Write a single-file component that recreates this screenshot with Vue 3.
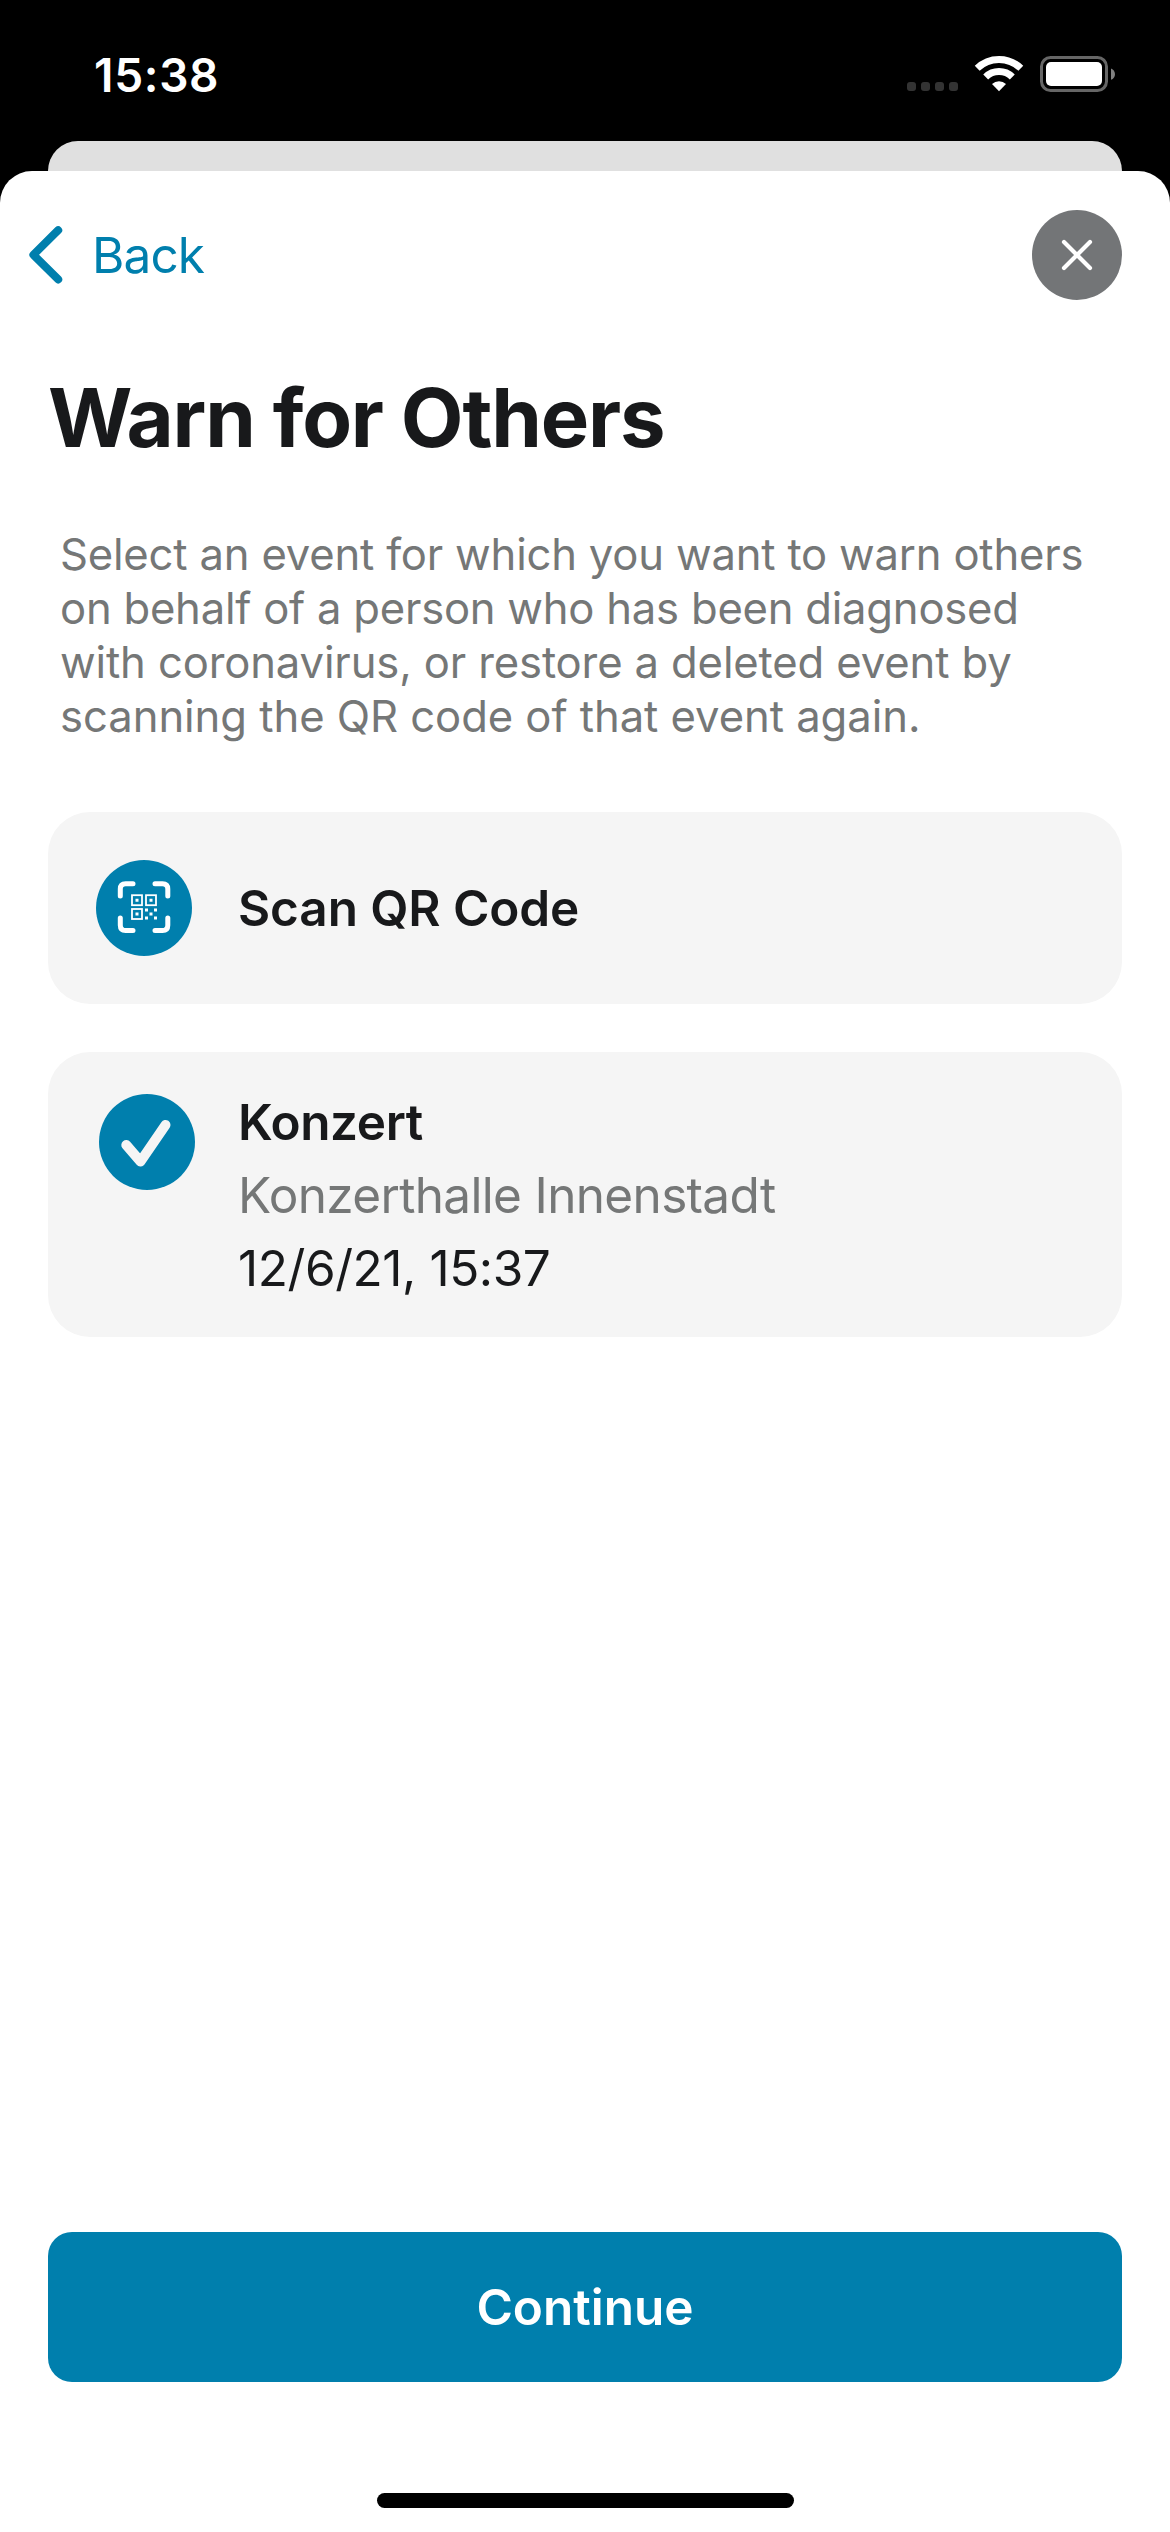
<script setup>
const introLines = [
  'Select an event for which you want to warn others',
  'on behalf of a person who has been diagnosed',
  'with coronavirus, or restore a deleted event by',
  'scanning the QR code of that event again.',
]
const event = { title: 'Konzert', place: 'Konzerthalle Innenstadt', date: '12/6/21, 15:37' }
</script>

<template>
  <div class="screen">
    <header class="status">
      <span class="time">15:38</span>
      <svg class="status-icons" width="220" height="47" viewBox="900 51 220 47">
        <g fill="#333">
          <rect x="907" y="82" width="9" height="9" rx="3" />
          <rect x="921" y="82" width="9" height="9" rx="3" />
          <rect x="935" y="82" width="9" height="9" rx="3" />
          <rect x="949" y="82" width="9" height="9" rx="3" />
        </g>
        <g fill="none" stroke="#fff" stroke-width="7">
          <path d="M977.2 68.300A31.300 31.300 0 0 1 1020.800 68.300" />
          <path d="M985.700 77A19 19 0 0 1 1012.300 77" />
        </g>
        <path d="M999 91.200l-7-7.200a10.600 10.600 0 0 1 14 0z" fill="#fff" />
        <rect x="1041.500" y="57.500" width="65" height="33" rx="9" fill="none" stroke="#666" stroke-width="3" />
        <rect x="1046" y="62" width="56" height="24" rx="5" fill="#fff" />
        <path d="M1111 68.400c5.300 2 5.300 9.400 0 11.400z" fill="#808080" />
      </svg>
    </header>
    <div class="behind"></div>
    <main class="sheet">
      <nav class="nav">
        <a class="back">
          <svg width="40" height="64" viewBox="26 223 40 64">
            <path d="M58.200 230.200L33.400 254.800L58.200 279.400" fill="none" stroke="#007fad" stroke-width="8" stroke-linecap="round" stroke-linejoin="round" />
          </svg>
          <span>Back</span>
        </a>
        <button class="close" aria-label="Close">
          <svg width="90" height="90" viewBox="0 0 90 90">
            <path d="M32 32L58 58M58 32L32 58" stroke="#fff" stroke-width="4.200" stroke-linecap="round" />
          </svg>
        </button>
      </nav>
      <h1 class="title">Warn for Others</h1>
      <p class="intro">
        <span v-for="line in introLines" :key="line" class="line">{{ line }}</span>
      </p>
      <section class="cards">
        <article class="card scan">
          <svg class="badge" width="96" height="96" viewBox="0 0 96 96">
            <circle cx="48" cy="48" r="48" fill="#007fad" />
            <path d="M24.300 36V29q0-5.300 5.300-5.300H37M59 23.700h7.500q5.300 0 5.300 5.300v7M71.800 58v7.200q0 5.300-5.300 5.300H59M37 70.500h-7.400q-5.300 0-5.300-5.300V58" fill="none" stroke="#fff" stroke-width="5" stroke-linecap="round" />
            <g fill="none" stroke="#fff" stroke-width="1.800">
              <rect x="36" y="35.200" width="10" height="10" />
              <rect x="50" y="35.200" width="10" height="10" />
              <rect x="36" y="49" width="10" height="10" />
            </g>
            <g fill="#fff">
              <path d="M39.500 38.700h3v3h-3zM53.500 38.700h3v3h-3zM39.500 52.500h3v3h-3z" />
              <path d="M49 48.500h3v3h-3zM58 48.500h3v3h-3zM53.500 52.500h3v3h-3zM49 56.500h3v3h-3zM58 56.500h3v3h-3z" />
            </g>
          </svg>
          <strong>Scan QR Code</strong>
        </article>
        <article class="card event">
          <svg class="badge" width="96" height="96" viewBox="0 0 96 96">
            <circle cx="48" cy="48" r="48" fill="#007fad" />
            <path d="M27.300 51L41.500 67.500L66.500 31" fill="none" stroke="#f5f5f5" stroke-width="10" stroke-linecap="round" stroke-linejoin="round" />
          </svg>
          <div class="details">
            <strong>{{ event.title }}</strong>
            <span class="place">{{ event.place }}</span>
            <span class="date">{{ event.date }}</span>
          </div>
        </article>
      </section>
      <button class="continue">Continue</button>
      <div class="home"></div>
    </main>
  </div>
</template>

<style>
body { background: #000; }
</style>

<style scoped>
.screen {
  display: flex;
  flex-direction: column;
  width: 1170px;
  height: 2532px;
  overflow: hidden;
  background: #000;
  color: #18191b;
  font-family: Inter, "Liberation Sans", sans-serif;
  font-size: 49.5px;
}
.status {
  display: flex;
  align-items: center;
  justify-content: space-between;
  flex: none;
  box-sizing: border-box;
  height: 141px;
  padding: 8px 50px 0 94px;
  color: #fff;
}
.time { font-size: 46px; font-weight: 600; letter-spacing: 0.7px; }
.behind {
  flex: none;
  height: 30px;
  margin: 0 48px;
  border-radius: 30px 30px 0 0;
  background: #e0e0e0;
}
.sheet {
  display: flex;
  flex: 1;
  flex-direction: column;
  border-radius: 32px 32px 0 0;
  background: #fff;
}
.nav {
  display: flex;
  align-items: center;
  justify-content: space-between;
  height: 168px;
  padding: 0 48px 0 26px;
}
.back { display: flex; align-items: center; gap: 26px; color: #007fad; letter-spacing: -0.9px; }
button { padding: 0; border: 0; font: inherit; }
.close { width: 90px; height: 90px; border-radius: 50%; background: #737577; }
.close svg { display: block; }
.title {
  margin: 28px 0 0 48px;
  font-size: 81.4px;
  font-weight: 700;
  line-height: 101px;
  letter-spacing: -1.2px;
}
.intro { margin: 60px 0 0 60px; color: #757777; font-size: 43.6px; line-height: 54px; }
.line { display: block; white-space: nowrap; letter-spacing: -0.19px; }
.line:nth-child(2) { letter-spacing: -0.23px; }
.line:nth-child(3) { letter-spacing: -0.13px; }
.line:nth-child(4) { letter-spacing: -0.05px; }
.cards { display: flex; flex-direction: column; gap: 48px; margin: 68px 48px 0; }
.card { display: flex; box-sizing: border-box; border-radius: 42px; background: #f5f5f5; }
.card strong { font-weight: 600; letter-spacing: -0.1px; }
.scan { align-items: center; gap: 46px; height: 192px; padding: 0 48px; }
.event { align-items: flex-start; gap: 43px; height: 285px; padding: 42px 51px 0; }
.details { display: flex; flex-direction: column; margin-top: -8px; line-height: 73px; white-space: nowrap; }
.card .details strong { letter-spacing: -0.4px; }
.place { color: #757777; letter-spacing: -0.66px; }
.date { letter-spacing: -0.42px; }
.badge { flex: none; }
.continue {
  height: 150px;
  margin: auto 48px 0;
  border-radius: 24px;
  background: #007fad;
  color: #fff;
  font-weight: 600;
}
.home { flex: none; width: 417px; height: 15px; margin: 111px auto 24px; border-radius: 8px; background: #000; }
</style>
